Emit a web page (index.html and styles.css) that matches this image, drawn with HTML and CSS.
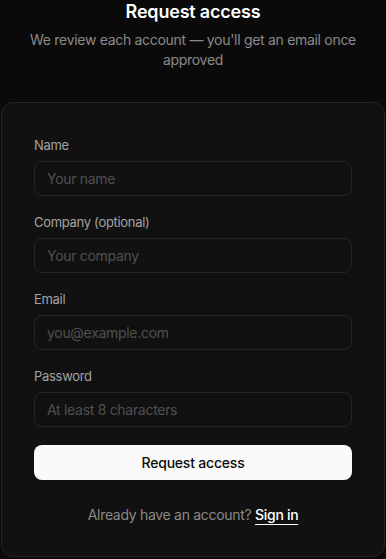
FILE: index.html
```html
<!DOCTYPE html>
<html lang="en">
<head>
<meta charset="utf-8">
<title>Request access</title>
<link rel="stylesheet" href="styles.css">
</head>
<body>
<main class="page">
  <header class="intro">
    <h1 class="title">Request access</h1>
    <p class="subtitle">We review each account — you'll get an email once approved</p>
  </header>
  <section class="card">
    <form class="form">
      <label class="field">
        <span class="label">Name</span>
        <input class="input" type="text" placeholder="Your name">
      </label>
      <label class="field">
        <span class="label">Company (optional)</span>
        <input class="input" type="text" placeholder="Your company">
      </label>
      <label class="field">
        <span class="label">Email</span>
        <input class="input" type="email" placeholder="you@example.com">
      </label>
      <label class="field">
        <span class="label">Password</span>
        <input class="input" type="password" placeholder="At least 8 characters">
      </label>
      <button class="submit" type="button">Request access</button>
    </form>
    <p class="footer">Already have an account? <a class="link" href="#">Sign in</a></p>
  </section>
</main>
</body>
</html>
```
FILE: styles.css
```css
* { box-sizing: border-box; }
html, body {
  margin: 0;
  background: #0a0a0a;
  color: #fff;
  font-family: Inter, "Noto Sans", sans-serif;
}
.page {
  width: 384px;
  margin: 0 auto;
  padding-bottom: 2px;
}
.intro {
  text-align: center;
  padding: 0 16px;
}
.title {
  margin: 0;
  font-size: 18px;
  line-height: 24px;
  font-weight: 600;
  letter-spacing: -0.2px;
}
.subtitle {
  margin: 6px 0 0;
  font-size: 14px;
  line-height: 20px;
  color: #8a8a8a;
  letter-spacing: -0.3px;
}
.card {
  margin-top: 32px;
  background: #111111;
  border: 1px solid #232323;
  border-radius: 12px;
  padding: 32px 32px 31px;
}
.form {
  display: flex;
  flex-direction: column;
  gap: 16px;
}
.field {
  display: flex;
  flex-direction: column;
  gap: 6px;
}
.label {
  font-size: 13px;
  line-height: 20px;
  color: #a3a3a3;
  letter-spacing: -0.3px;
}
.input {
  height: 35px;
  width: 100%;
  background: #111111;
  border: 1px solid #262626;
  border-radius: 8px;
  padding: 0 12px;
  font-family: inherit;
  font-size: 14px;
  letter-spacing: -0.3px;
  color: #fff;
  outline: none;
}
.input::placeholder { color: #4f4f4f; }
.submit {
  margin-top: 2px;
  height: 35px;
  background: #fafafa;
  color: #0a0a0a;
  border: 0;
  border-radius: 8px;
  font-family: inherit;
  font-size: 14px;
  font-weight: 500;
  letter-spacing: -0.2px;
}
.footer {
  margin: 25px 0 0;
  text-align: center;
  font-size: 14px;
  line-height: 20px;
  color: #8a8a8a;
  letter-spacing: -0.3px;
}
.link {
  color: #fff;
  font-weight: 500;
  text-decoration: underline;
  text-underline-offset: 4px;
}
```
